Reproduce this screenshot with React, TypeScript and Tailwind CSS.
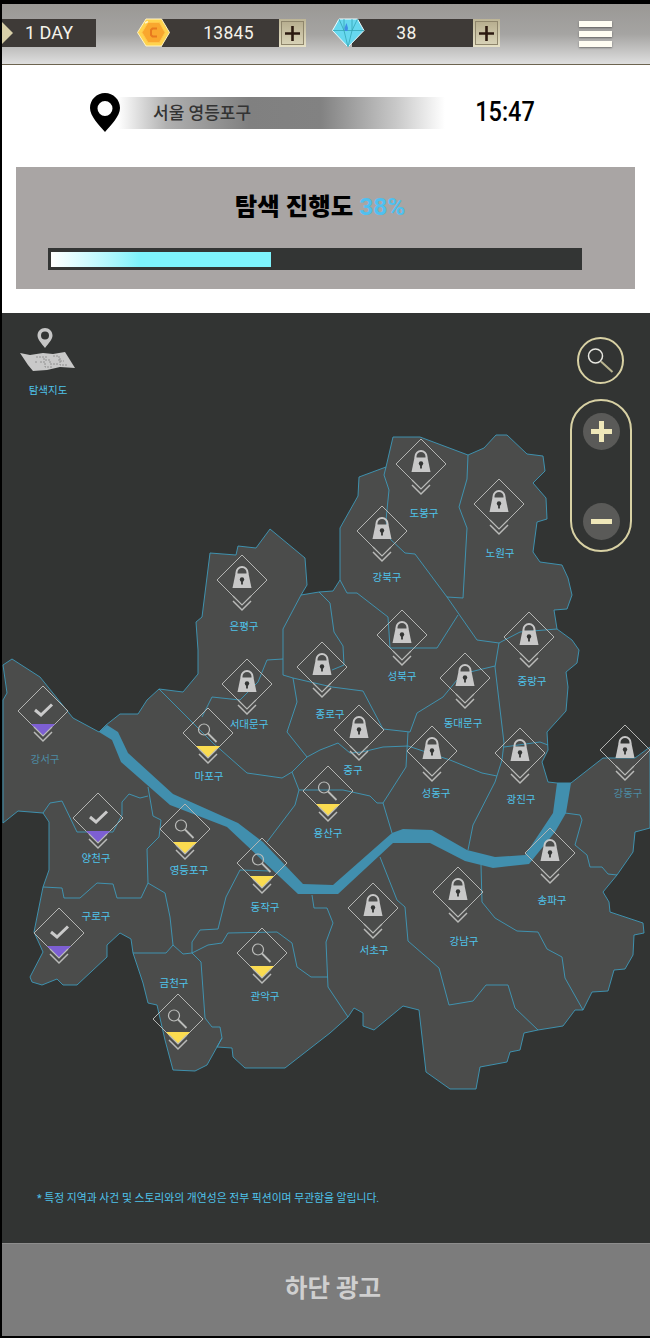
type MarkerKind = 'lock' | 'search' | 'check'

const outline =
  '99,732 106,725 120,714 138,714 147,700 159,689 183,692 198,674 198,650 196,622 202,617 210,553 236,555 238,546 256,548 270,529 305,558 307,585 301,595 319,592 333,591 340,580 340,528 358,496 359,477 386,467 393,437 420,437 468,455 484,448 496,435 507,435 527,454 543,456 545,471 533,483 546,498 547,519 537,522 533,552 540,562 562,565 568,578 572,595 567,609 554,610 557,629 572,640 579,650 577,663 566,672 568,687 566,711 547,732 548,750 542,762 548,782 557,783 571,783 603,758 635,758 650,747 650,828 635,832 633,852 617,875 603,892 609,902 610,912 643,923 644,933 634,935 633,955 625,969 614,970 608,991 592,992 583,1010 575,1010 563,1026 538,1030 524,1033 520,1050 510,1052 507,1062 480,1067 476,1089 450,1089 426,1072 419,1010 403,1006 374,1030 363,1026 363,1013 354,1008 348,1017 330,1033 285,1068 245,1068 233,1057 232,1048 217,1047 222,1038 207,1065 195,1071 173,1070 165,1040 157,1005 148,1003 143,983 133,953 131,939 120,933 107,945 107,957 77,985 63,985 57,979 42,985 32,982 30,977 43,952 34,932 43,887 49,870 49,822 43,813 18,811 3,823 3,700 7,693 3,665 12,659 40,677 73,718 99,732'

const borders = [
  '386,467 384,475 389,490 386,520 388,537 405,553 415,554 447,597 463,598 467,528 459,507 467,479 468,455',
  '447,597 477,640 499,643 495,667 504,743 502,760 495,782 473,825 468,850',
  '499,643 520,632 557,629',
  '340,580 347,593 357,593 388,617 390,648 437,648 458,615',
  '319,592 330,603 334,632 343,646 344,665 332,670',
  '293,678 332,687 363,691 383,729 410,732 417,713 443,697 457,680 470,672 495,666',
  '301,595 283,629 283,675 293,678 297,702 287,732 307,757 292,772 282,778 247,773 213,743 159,689',
  '283,659 267,660 258,682 240,700 212,697 202,717',
  '307,757 320,750 338,743 350,753 362,752 383,747 408,746',
  '408,732 406,767 383,803 392,833',
  '408,746 450,760 482,773 497,776',
  '504,747 540,742 548,745',
  '292,772 299,790 295,805 267,842',
  '299,790 343,790 370,796 377,803 383,803',
  '380,857 397,900 405,907 408,941 439,968 449,1005 473,1001 486,985 508,985 515,1008 538,1030',
  '481,865 482,902 495,918 517,931 538,932 547,949 562,957 565,978 583,1010',
  '565,813 580,815 582,820 575,845 587,855 590,867 602,867 608,874 617,875',
  '312,895 314,908 327,908 333,923 326,942 328,987 348,1017',
  '192,953 208,945 222,943 228,933 277,932 292,943 297,967 311,977 328,977',
  '240,870 226,897 218,929 200,930 192,942 192,953 183,954 173,945 166,953 133,953',
  '240,870 270,871',
  '192,953 201,962 205,1018 212,1027 220,1027 222,1038',
  '148,883 165,893 170,917 173,945',
  '148,787 153,816 161,820 159,837 147,849 148,883 141,898 117,898 113,884 97,883 80,898 64,898 62,888 43,887',
  '148,796 140,798 129,794 122,802 122,815 113,832 77,832 62,801 50,803 43,813',
]

const river =
  '99,732 107,725 118,732 128,753 173,794 238,823 263,842 303,884 333,885 392,833 403,829 432,830 467,850 495,857 525,855 553,813 557,783 571,783 566,813 555,832 529,864 493,868 465,861 430,843 393,843 338,894 298,894 227,827 170,805 121,762 112,740'

const markers: { x: number; y: number; kind: MarkerKind }[] = [
  { x: 242, y: 580, kind: 'lock' },
  { x: 421, y: 464, kind: 'lock' },
  { x: 499, y: 504, kind: 'lock' },
  { x: 382, y: 531, kind: 'lock' },
  { x: 402, y: 635, kind: 'lock' },
  { x: 529, y: 637, kind: 'lock' },
  { x: 247, y: 684, kind: 'lock' },
  { x: 322, y: 667, kind: 'lock' },
  { x: 465, y: 678, kind: 'lock' },
  { x: 359, y: 730, kind: 'lock' },
  { x: 432, y: 751, kind: 'lock' },
  { x: 520, y: 753, kind: 'lock' },
  { x: 625, y: 750, kind: 'lock' },
  { x: 550, y: 853, kind: 'lock' },
  { x: 458, y: 892, kind: 'lock' },
  { x: 373, y: 908, kind: 'lock' },
  { x: 208, y: 733, kind: 'search' },
  { x: 185, y: 829, kind: 'search' },
  { x: 262, y: 863, kind: 'search' },
  { x: 328, y: 791, kind: 'search' },
  { x: 262, y: 953, kind: 'search' },
  { x: 178, y: 1019, kind: 'search' },
  { x: 43, y: 711, kind: 'check' },
  { x: 98, y: 818, kind: 'check' },
  { x: 59, y: 933, kind: 'check' },
]

const labels = [
  { name: '은평구', x: 244, y: 627 },
  { name: '도봉구', x: 424, y: 514 },
  { name: '노원구', x: 500, y: 554 },
  { name: '강북구', x: 387, y: 578 },
  { name: '성북구', x: 402, y: 677 },
  { name: '중랑구', x: 532, y: 682 },
  { name: '서대문구', x: 249, y: 725 },
  { name: '종로구', x: 330, y: 715 },
  { name: '동대문구', x: 463, y: 724 },
  { name: '중구', x: 353, y: 771 },
  { name: '성동구', x: 436, y: 794 },
  { name: '광진구', x: 521, y: 800 },
  { name: '강동구', x: 628, y: 794, dim: true },
  { name: '송파구', x: 552, y: 901 },
  { name: '강남구', x: 464, y: 942 },
  { name: '서초구', x: 374, y: 951 },
  { name: '마포구', x: 209, y: 777 },
  { name: '영등포구', x: 189, y: 871 },
  { name: '동작구', x: 265, y: 908 },
  { name: '용산구', x: 328, y: 834 },
  { name: '관악구', x: 265, y: 997 },
  { name: '금천구', x: 174, y: 984 },
  { name: '강서구', x: 45, y: 760, dim: true },
  { name: '양천구', x: 96, y: 859 },
  { name: '구로구', x: 96, y: 917 },
]

function Plus() {
  return (
    <div className="w-[27px] h-[28px] p-[2px] bg-gradient-to-b from-[#bdb596] to-[#e6e1c6]">
      <div className="w-full h-full flex items-center justify-center border border-[#8f866c] bg-gradient-to-b from-[#b8af90] to-[#d8d2b6]">
        <svg width="15" height="15" viewBox="0 0 15 15">
          <path d="M6.2 0h2.6v6.2H15v2.6H8.8V15H6.2V8.800H0V6.200h6.200z" fill="#2c1a10" />
        </svg>
      </div>
    </div>
  )
}

function Coin() {
  return (
    <svg width="33" height="29" viewBox="0 0 33 29" className="absolute left-0 top-[-1px]">
      <polygon points="0.500,14.500 9,1 24.500,1 32.500,14.500 24.500,28 9,28" fill="#ffd34d" stroke="#fff3c4" strokeWidth="1" />
      <polygon points="5,14.500 11,4.500 22.500,4.500 28,14.500 22.500,24.500 11,24.500" fill="#f9a72e" stroke="#ffc64a" strokeWidth="1" />
      <path d="M20 10.500h-4.500l-1.500 1.500v5l1.500 1.500H20" fill="none" stroke="#e87a1e" strokeWidth="2" />
      <path d="M8 5l3-1.500" stroke="#fff6d0" strokeWidth="1.500" />
    </svg>
  )
}

function Gem() {
  return (
    <svg width="33" height="30" viewBox="0 0 33 30" className="absolute left-0 top-[-1px]">
      <polygon points="0.500,12.500 7,1 25.500,1 32,12.500 16,29" fill="#67d8ef" stroke="#eefcff" strokeWidth="1" />
      <path d="M1 12.500h31M7 1l5 11.500L16 29l4-16.500L25.500 1M12 1v11.500M20 1v11.500" fill="none" stroke="#35a6b5" strokeWidth="0.800" />
      <polygon points="12.500,10 14.500,5 16,10 15.500,13 13,13" fill="#3f8fe6" />
    </svg>
  )
}

function Marker({ kind }: { kind: MarkerKind }) {
  return (
    <svg width="60" height="66" viewBox="-30 -30 60 66" className="overflow-visible">
      <polygon points="0,-25 25,0 0,25 -25,0" fill="none" stroke="#b4b5b3" strokeWidth="1" />
      {kind !== 'lock' && (
        <polygon points="-12,13 12,13 0,25" fill={kind === 'search' ? '#fbdc50' : '#7d5fd3'} />
      )}
      <path d="M-9 16l9 9 9-9" fill="none" stroke="#b9bab8" strokeWidth="1.200" />
      <path d="M-9 21l9 9 9-9" fill="none" stroke="#b9bab8" strokeWidth="1.500" />
      {kind === 'lock' && (
        <g>
          <path d="M-5.500 -6v-1.500a5.500 5.500 0 0 1 11 0V-6" fill="none" stroke="#c8c8c8" strokeWidth="2" />
          <path d="M-6.500 -6.500h13L9.500 8h-19z" fill="#c8c8c8" />
          <circle cx="0" cy="-0.500" r="2.200" fill="#333534" />
          <path d="M-0.900 0h1.800v4.500h-1.800z" fill="#333534" />
        </g>
      )}
      {kind === 'search' && (
        <g fill="none" stroke="#bcbdbb">
          <circle cx="-4" cy="-3.500" r="5.500" strokeWidth="1.200" />
          <path d="M0 0.500L8.500 9" strokeWidth="1.800" />
        </g>
      )}
      {kind === 'check' && (
        <path d="M-8 -1l6 5 11-10.500" fill="none" stroke="#cacaca" strokeWidth="3" />
      )}
    </svg>
  )
}

function SeoulMap() {
  return (
    <svg width="648" height="930" viewBox="2 313 648 930" className="absolute inset-0">
      <polygon points={outline} fill="#4b4c4b" stroke="#3e9aba" strokeWidth="0.900" />
      {borders.map((line) => (
        <polyline key={line} points={line} fill="none" stroke="#3e9aba" strokeWidth="0.900" />
      ))}
      <polygon points={river} fill="#418fae" />
    </svg>
  )
}

export default function App() {
  return (
    <div className="w-[650px] h-[1338px] bg-black pl-[2px] pt-[4px] overflow-hidden font-['Roboto','Noto_Sans_CJK_KR',sans-serif]">
      <header className="h-[61px] flex pt-[15px] border-b border-[#6d6450] bg-gradient-to-b from-[#9a9895] via-[#a5a4a2] via-50% to-[#dfdfdf]">
        <div className="relative w-[94px] h-[28px] bg-[#3e3a37] pl-[23px] flex items-center text-[18px] leading-none text-[#f5f2ea]">
          <div className="absolute left-0 top-[3px] border-y-[11px] border-y-transparent border-l-[11px] border-l-[#d8cfa8]" />
          1 DAY
        </div>
        <div className="relative ml-[41px] w-[169px] h-[28px] pl-[25px] flex">
          <div className="flex-1 bg-[#3e3a37] flex items-center justify-center pl-[16px] text-[17.500px] tracking-[0.3px] text-[#f5f2ea]">13845</div>
          <Plus />
          <Coin />
        </div>
        <div className="relative ml-[26px] w-[168px] h-[28px] pl-[20px] flex">
          <div className="flex-1 bg-[#3e3a37] flex items-center justify-center pr-[12px] text-[17.500px] tracking-[0.3px] text-[#f5f2ea]">38</div>
          <Plus />
          <Gem />
        </div>
        <div className="ml-[79px] mt-[2px] w-[33px] h-[26px] flex flex-col justify-between">
          <div className="h-[6px] bg-[#fffdf2] shadow-[0_1px_2px_rgba(0,0,0,0.4)]" />
          <div className="h-[6px] bg-[#fffdf2] shadow-[0_1px_2px_rgba(0,0,0,0.4)]" />
          <div className="h-[6px] bg-[#fffdf2] shadow-[0_1px_2px_rgba(0,0,0,0.4)]" />
        </div>
      </header>

      <section className="h-[248px] bg-white">
        <div className="h-[102px] pt-[28px] pl-[88px]">
          <div className="flex items-center h-[39px]">
            <svg width="30" height="39" viewBox="0 0 30 39" className="relative z-10">
              <path d="M15 0C6.700 0 0 6.700 0 15c0 8 9 17 15 24 6-7 15-16 15-24C30 6.700 23.300 0 15 0zm0 23a7.500 7.500 0 1 1 0-15 7.500 7.500 0 0 1 0 15z" fill="#000" />
            </svg>
            <div className="ml-[-2px] w-[327px] h-[32px] pl-[35px] pt-[2px] flex items-center bg-[linear-gradient(90deg,#fff_0%,#b0b0b0_15%,#808080_40%,#828282_62%,#c8c8c8_85%,#fff_100%)] text-[17px] font-medium text-[#333]">
              서울 영등포구
            </div>
            <div className="ml-[31px] w-[58px] flex justify-center text-[27px] font-medium text-black scale-x-[0.87]">15:47</div>
          </div>
        </div>
        <div className="ml-[14px] w-[619px] h-[122px] bg-[#a9a5a4] flex flex-col">
          <div className="pt-[25px] h-[55px] pr-[11px] text-center text-[24.400px] leading-[30px] font-black text-black">
            탐색 진행도 <span className="text-[#4fc0f0] font-bold">38%</span>
          </div>
          <div className="mt-[26px] ml-[32px] w-[534px] h-[22px] bg-[#333534] pt-[4px] pl-[3px]">
            <div className="w-[220px] h-[15px] bg-gradient-to-r from-white via-[#7ef3fc] via-[40%] to-[#7ef3fc]" />
          </div>
        </div>
      </section>

      <main className="relative h-[930px] bg-[#323433]">
        <SeoulMap />
        {markers.map((m) => (
          <div key={`${m.x}-${m.y}`} className="absolute" style={{ left: m.x - 32, top: m.y - 343 }}>
            <Marker kind={m.kind} />
          </div>
        ))}
        {labels.map((l) => (
          <span
            key={l.name}
            className={`absolute -translate-x-1/2 -translate-y-1/2 whitespace-nowrap text-[10.500px] leading-none ${l.dim ? 'text-[#4d8ba3]' : 'text-[#4fc3ea]'}`}
            style={{ left: l.x - 2, top: l.y - 313 }}
          >
            {l.name}
          </span>
        ))}

        <div className="absolute left-[16px] top-[13px] w-[60px] flex flex-col items-center">
          <svg width="60" height="47" viewBox="18 326 60 47">
            <path d="M45 328c-4.200 0-7.500 3.300-7.500 7.500 0 4 4 8 7.500 12.500 3.500-4.500 7.500-8.500 7.500-12.500 0-4.200-3.300-7.500-7.500-7.500zm0 11.500a4 4 0 1 1 0-8 4 4 0 0 1 0 8z" fill="#c6c6c6" />
            <polygon points="20,353 30,355 43,353 53,354 65,352 75,368 60,367 47,370 33,371 28,365" fill="#c9c9c9" />
            <path d="M36 357h8v3h6v4h8M46 356v3M53 356h6v5h5M40 362h5v5h7M60 358v7h8M35 362h2" fill="none" stroke="#858585" strokeWidth="0.800" strokeDasharray="2 1" />
          </svg>
          <span className="mt-[11px] text-[10.500px] leading-[14px] text-[#4fc3ea]">탐색지도</span>
        </div>

        <button className="absolute left-[575px] top-[24px] w-[47px] h-[47px] rounded-full border-2 border-[#d8d1a4] flex items-center justify-center">
          <svg width="30" height="30" viewBox="0 0 30 30">
            <circle cx="9.500" cy="10" r="7" fill="none" stroke="#e7e7e0" strokeWidth="1.500" />
            <path d="M15 15.500L26.500 26" stroke="#b9b48f" strokeWidth="2" />
          </svg>
        </button>

        <div className="absolute left-[568px] top-[86px] w-[62px] h-[153px] rounded-full border-2 border-[#d8d1a4] flex flex-col items-center justify-between pt-[12px] pb-[10px]">
          <div className="w-[37px] h-[37px] rounded-full bg-[#5a5a58] flex items-center justify-center">
            <svg width="21" height="21" viewBox="0 0 21 21">
              <path d="M8 0h5v8h8v5h-8v8H8v-8H0V8h8z" fill="#efe7b9" />
            </svg>
          </div>
          <div className="w-[37px] h-[37px] rounded-full bg-[#5a5a58] flex items-center justify-center">
            <div className="w-[21px] h-[5px] bg-[#efe7b9]" />
          </div>
        </div>

        <p className="absolute left-[35px] top-[881px] text-[10.800px] leading-none text-[#4fc3ea]">
          * 특정 지역과 사건 및 스토리와의 개연성은 전부 픽션이며 무관함을 알립니다.
        </p>
      </main>

      <div className="h-[93px] pl-[14px] pb-[2px] bg-[#7c7c7c] border-t border-[#8d8d8d] flex items-center justify-center text-[24.500px] font-bold text-[#cfcfcf]">
        하단 광고
      </div>
    </div>
  )
}
